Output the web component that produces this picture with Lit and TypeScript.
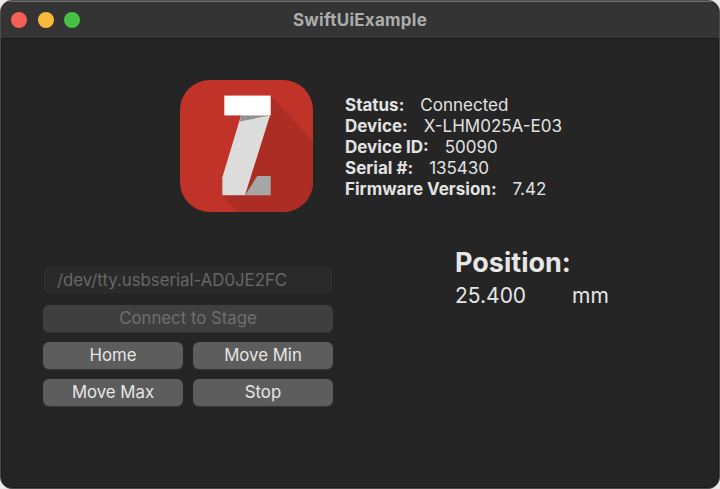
import { LitElement, html, css } from "lit";
import { customElement } from "lit/decorators.js";

@customElement("app-root")
export class AppRoot extends LitElement {
  static styles = css`
    :host { display: block; width: 720px; height: 489px; background: #e8e8e8; font-family: Inter, "Liberation Sans", sans-serif; overflow: hidden; }
    .window { box-sizing: border-box; width: 720px; height: 489px; border-radius: 12px; background: #252525; border: 1px solid #4c4c4c; box-shadow: inset 0 0 0 1px #1c1c1c; display: flex; flex-direction: column; overflow: hidden; }
    .titlebar { flex: none; height: 38px; box-sizing: border-box; background: #343434; border-top: 1px solid #707070; border-bottom: 1px solid #171717; position: relative; display: flex; align-items: center; justify-content: center; }
    .lights { position: absolute; left: 10px; top: 10px; display: flex; gap: 10.5px; }
    .light { width: 16px; height: 16px; border-radius: 50%; }
    .red { background: #f55f55; } .yellow { background: #f9b939; } .green { background: #48c043; }
    .title { color: #acacac; font-size: 17px; font-weight: 700; letter-spacing: 0.25px; margin-top: -1px; }
    .top { display: flex; padding: 41px 0 0 179px; gap: 32px; }
    .logo { width: 133px; height: 132px; flex: none; display: block; }
    .info { padding-top: 15px; color: #e2e2e2; font-size: 17px; line-height: 21px; }
    .info b { font-weight: 700; margin-right: 16px; }
    .bottom { display: flex; padding: 54px 0 0 42px; }
    .controls { width: 290px; flex: none; display: flex; flex-direction: column; gap: 10px; padding-top: 1px; }
    .field { box-sizing: border-box; height: 26px; margin: 0 1px 2px; border-radius: 5px; background: #2a2a2a; border: 1px solid #303030; color: #676767; font-size: 16.8px; line-height: 24px; padding-left: 12px; }
    .btn { height: 27px; border-radius: 6px; background: #5d5d5d; color: #e6e6e6; font-size: 16.8px; line-height: 26px; text-align: center; box-shadow: 0 1px 0 #333; }
    .btn.off { background: #3f3f3f; color: #6f6f6f; }
    .grid { display: grid; grid-template-columns: 140px 140px; column-gap: 10px; row-gap: 10px; }
    .position { padding: 0 0 0 122px; margin-top: -21px; color: #e6e6e6; }
    .position h2 { margin: 0; font-size: 27px; line-height: 36px; font-weight: 700; }
    .readout { display: flex; font-size: 21px; line-height: 30px; }
    .readout span:first-child { width: 117px; }
  `;

  render() {
    return html`
      <div class="window">
        <div class="titlebar">
          <div class="lights">
            <div class="light red"></div><div class="light yellow"></div><div class="light green"></div>
          </div>
          <div class="title">SwiftUiExample</div>
        </div>
        <div class="top">
          <svg class="logo" viewBox="0 0 133 133" preserveAspectRatio="none">
            <defs><clipPath id="r"><rect width="133" height="133" rx="30"/></clipPath></defs>
            <g clip-path="url(#r)">
              <rect width="133" height="133" fill="#c13228"/>
              <polygon points="90.7,15.7 133,62 133,133 57,133 42.3,116 77,60" fill="#ab2d24"/>
              <polygon points="61,35.7 90,35.7 65,116 42.3,116 42.3,98.3" fill="#dcdcdc"/>
              <polygon points="61,35.7 90,35.7 60,41.7" fill="#909090"/>
              <polygon points="77.3,96.7 90.7,96.7 90.7,116 65,116" fill="#a6a6a6"/>
              <rect x="44.3" y="15.7" width="46.4" height="20" fill="#fff"/>
            </g>
          </svg>
          <div class="info">
            <div><b>Status:</b>Connected</div>
            <div><b>Device:</b>X-LHM025A-E03</div>
            <div><b>Device ID:</b>50090</div>
            <div><b>Serial #:</b>135430</div>
            <div><b>Firmware Version:</b>7.42</div>
          </div>
        </div>
        <div class="bottom">
          <div class="controls">
            <div class="field">/dev/tty.usbserial-AD0JE2FC</div>
            <div class="btn off">Connect to Stage</div>
            <div class="grid">
              <div class="btn">Home</div>
              <div class="btn">Move Min</div>
              <div class="btn">Move Max</div>
              <div class="btn">Stop</div>
            </div>
          </div>
          <div class="position">
            <h2>Position:</h2>
            <div class="readout"><span>25.400</span><span>mm</span></div>
          </div>
        </div>
      </div>
    `;
  }
}
